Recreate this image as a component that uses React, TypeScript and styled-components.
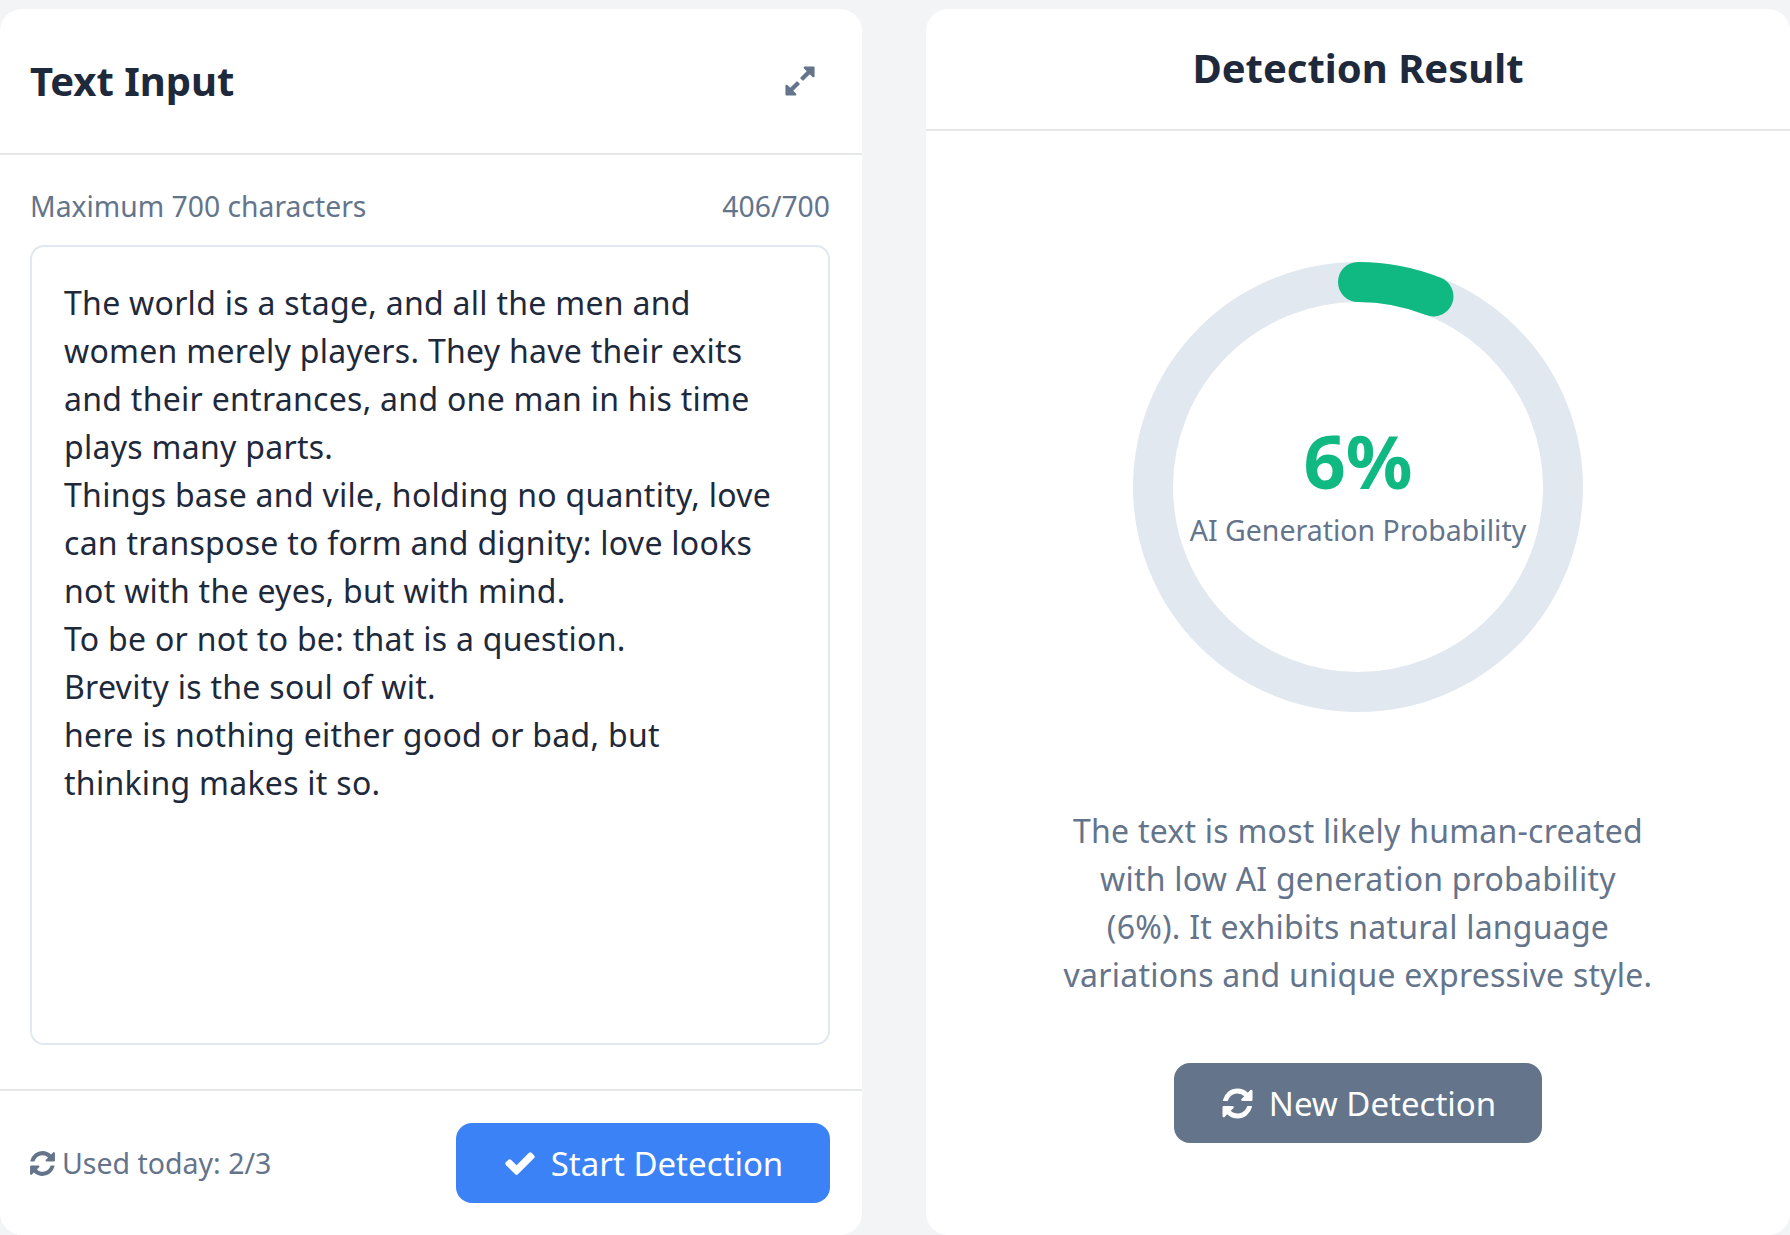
import styled, { createGlobalStyle } from "styled-components";

const GlobalStyle = createGlobalStyle`
  html, body {
    margin: 0;
    height: 1235px;
    overflow: hidden;
    background: #f3f4f6;
    font-family: "Noto Sans", "Open Sans", sans-serif;
  }
  * {
    box-sizing: border-box;
  }
`;

const Page = styled.div`
  display: grid;
  grid-template-columns: 862px 864px;
  column-gap: 64px;
  height: 1235px;
  padding-top: 9px;
`;

const Panel = styled.section`
  display: flex;
  flex-direction: column;
  background: #ffffff;
  border-radius: 22px;
  min-width: 0;
`;

const InputHeader = styled.header`
  display: flex;
  justify-content: space-between;
  align-items: center;
  height: 146px;
  padding: 0 45px 0 30px;
  border-bottom: 2px solid #e5e7eb;
`;

const Title = styled.h2`
  margin: 0 0 2px;
  font-size: 40px;
  font-weight: 700;
  color: #1e293b;
`;

const ExpandButton = styled.span`
  display: flex;
  color: #64748b;
`;

const InputBody = styled.div`
  flex: 1;
  display: flex;
  flex-direction: column;
  padding: 0 32px 0 30px;
`;

const MetaRow = styled.div`
  display: flex;
  justify-content: space-between;
  align-items: center;
  height: 90px;
  padding-top: 12px;
  font-size: 28.3px;
  color: #64748b;
`;

const TextBox = styled.textarea`
  display: block;
  width: 100%;
  height: 800px;
  padding: 32px;
  border: 2px solid #e2e8f0;
  border-radius: 14px;
  outline: none;
  resize: none;
  overflow: hidden;
  white-space: pre;
  font-family: inherit;
  font-size: 32px;
  letter-spacing: 0.28px;
  line-height: 48px;
  color: #1e293b;
`;

const InputFooter = styled.footer`
  display: flex;
  justify-content: space-between;
  align-items: center;
  height: 146px;
  margin-top: auto;
  padding: 0 32px 0 28px;
  border-top: 2px solid #e5e7eb;
`;

const Usage = styled.div`
  display: flex;
  align-items: center;
  gap: 5px;
  font-size: 28.5px;
  color: #64748b;
`;

const ActionButton = styled.button<{ $tone: string; $width: number }>`
  display: flex;
  align-items: center;
  justify-content: center;
  gap: 14px;
  width: ${(p) => p.$width}px;
  height: 80px;
  border: 0;
  border-radius: 16px;
  background: ${(p) => p.$tone};
  color: #ffffff;
  font-family: inherit;
  font-size: 33px;
`;

const ResultHeader = styled.header`
  display: flex;
  justify-content: center;
  align-items: center;
  height: 122px;
  padding-bottom: 2px;
  border-bottom: 2px solid #e5e7eb;
`;

const ResultBody = styled.div`
  flex: 1;
  display: flex;
  flex-direction: column;
  align-items: center;
  padding-top: 131px;
`;

const Gauge = styled.div`
  position: relative;
  width: 450px;
  height: 450px;
`;

const GaugeLabel = styled.div`
  position: absolute;
  inset: 0;
  display: flex;
  flex-direction: column;
  align-items: center;
  justify-content: center;
  padding-bottom: 12px;
`;

const Percent = styled.div`
  font-size: 74px;
  font-weight: 700;
  line-height: 98px;
  color: #10b981;
`;

const Caption = styled.div`
  font-size: 28.5px;
  line-height: 40px;
  color: #64748b;
  white-space: nowrap;
`;

const Description = styled.p`
  width: 596px;
  margin: 95px 0 64px;
  font-size: 32px;
  letter-spacing: 0.23px;
  line-height: 48px;
  color: #64748b;
  text-align: center;
`;

const radius = 205;
const circumference = 2 * Math.PI * radius;

const text = `The world is a stage, and all the men and
women merely players. They have their exits
and their entrances, and one man in his time
plays many parts.
Things base and vile, holding no quantity, love
can transpose to form and dignity: love looks
not with the eyes, but with mind.
To be or not to be: that is a question.
Brevity is the soul of wit.
here is nothing either good or bad, but
thinking makes it so.`;

const Icon = ({ d, size }: { d: string; size: number }) => (
  <svg width={size} height={size} viewBox="0 0 1792 1792" fill="currentColor">
    <path d={d} />
  </svg>
);

const refreshPath =
  "M1639 1056q0 5-1 7-64 268-268 434.5t-478 166.5q-146 0-282.5-55t-243.5-157l-129 129q-19 19-45 19t-45-19-19-45v-448q0-26 19-45t45-19h448q26 0 45 19t19 45-19 45l-137 137q71 66 161 102t187 36q134 0 250-65t186-179q11-17 53-117 8-23 30-23h192q13 0 22.5 9.5t9.5 22.5zm25-800v448q0 26-19 45t-45 19h-448q-26 0-45-19t-19-45 19-45l138-138q-148-137-349-137-134 0-250 65t-186 179q-11 17-53 117-8 23-30 23h-199q-13 0-22.5-9.5t-9.5-22.5v-7q65-268 270-434.5t480-166.5q146 0 284 55.5t245 156.5l130-129q19-19 45-19t45 19 19 45z";
const expandPath =
  "M883 1056q0 13-10 23l-332 332 144 144q19 19 19 45t-19 45-45 19h-448q-26 0-45-19t-19-45v-448q0-26 19-45t45-19 45 19l144 144 332-332q10-10 23-10t23 10l114 114q10 10 10 23zm781-864v448q0 26-19 45t-45 19-45-19l-144-144-332 332q-10 10-23 10t-23-10l-114-114q-10-10-10-23t10-23l332-332-144-144q-19-19-19-45t19-45 45-19h448q26 0 45 19t19 45z";
const checkPath =
  "M1671 566q0 40-28 68l-724 724-136 136q-28 28-68 28t-68-28l-136-136-362-362q-28-28-28-68t28-68l136-136q28-28 68-28t68 28l294 295 656-657q28-28 68-28t68 28l136 136q28 28 28 68z";

export default function App() {
  return (
    <>
      <GlobalStyle />
      <Page>
        <Panel>
          <InputHeader>
            <Title>Text Input</Title>
            <ExpandButton>
              <Icon d={expandPath} size={34} />
            </ExpandButton>
          </InputHeader>
          <InputBody>
            <MetaRow>
              <span>Maximum 700 characters</span>
              <span>406/700</span>
            </MetaRow>
            <TextBox value={text} readOnly />
          </InputBody>
          <InputFooter>
            <Usage>
              <Icon d={refreshPath} size={29} />
              Used today: 2/3
            </Usage>
            <ActionButton $tone="#3b82f6" $width={374}>
              <Icon d={checkPath} size={34} />
              Start Detection
            </ActionButton>
          </InputFooter>
        </Panel>
        <Panel>
          <ResultHeader>
            <Title>Detection Result</Title>
          </ResultHeader>
          <ResultBody>
            <Gauge>
              <svg width="450" height="450" viewBox="0 0 450 450">
                <circle cx="225" cy="225" r={radius} fill="none" stroke="#e2e8f0" strokeWidth="40" />
                <circle
                  cx="225"
                  cy="225"
                  r={radius}
                  fill="none"
                  stroke="#10b981"
                  strokeWidth="40"
                  strokeLinecap="round"
                  strokeDasharray={`${circumference * 0.06} ${circumference}`}
                  transform="rotate(-90 225 225)"
                />
              </svg>
              <GaugeLabel>
                <Percent>6%</Percent>
                <Caption>AI Generation Probability</Caption>
              </GaugeLabel>
            </Gauge>
            <Description>
              The text is most likely human-created with low AI generation probability (6%). It
              exhibits natural language variations and unique expressive style.
            </Description>
            <ActionButton $tone="#64748b" $width={368}>
              <Icon d={refreshPath} size={35} />
              New Detection
            </ActionButton>
          </ResultBody>
        </Panel>
      </Page>
    </>
  );
}
